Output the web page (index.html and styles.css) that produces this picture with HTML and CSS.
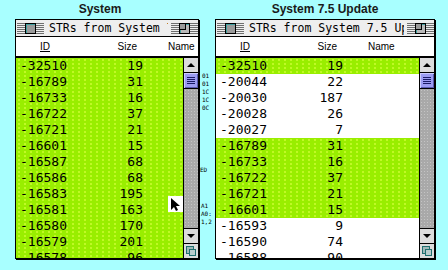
FILE: index.html
```html
<!DOCTYPE html>
<html lang="en">
<head>
    <meta charset="UTF-8">
    <title>STR# compare</title>
    <link rel="stylesheet" href="styles.css">
</head>
<body>
    <div class="desk">
        <!-- bits of windows lying behind -->
        <div class="behind">
            <span class="frag f1">01<br>01<br>1C<br>1C<br>0C</span>
            <span class="frag f3">ED</span>
            <span class="frag f4">A1<br>A0:<br>1,2</span>
        </div>

        <section class="pane pane-left">
            <h2>System</h2>
            <div class="win">
                <div class="titlebar">
                    <span class="stripes"></span>
                    <span class="closebox"></span>
                    <span class="stripes"></span>
                    <span class="title">STRs from System 7.5</span>
                    <span class="stripes"></span>
                    <span class="zoombox"></span>
                    <span class="stripes"></span>
                </div>
                <div class="colhead">
                    <span class="c-id"><u>ID</u></span>
                    <span class="c-size">Size</span>
                    <span class="c-name">Name</span>
                </div>
                <div class="body">
                    <div class="list">
                        <div class="row hit"><span class="c-id">-32510</span><span class="c-size">19</span></div>
                        <div class="row hit"><span class="c-id">-16789</span><span class="c-size">31</span></div>
                        <div class="row hit"><span class="c-id">-16733</span><span class="c-size">16</span></div>
                        <div class="row hit"><span class="c-id">-16722</span><span class="c-size">37</span></div>
                        <div class="row hit"><span class="c-id">-16721</span><span class="c-size">21</span></div>
                        <div class="row hit"><span class="c-id">-16601</span><span class="c-size">15</span></div>
                        <div class="row hit"><span class="c-id">-16587</span><span class="c-size">68</span></div>
                        <div class="row hit"><span class="c-id">-16586</span><span class="c-size">68</span></div>
                        <div class="row hit"><span class="c-id">-16583</span><span class="c-size">195</span></div>
                        <div class="row hit"><span class="c-id">-16581</span><span class="c-size">163</span></div>
                        <div class="row hit"><span class="c-id">-16580</span><span class="c-size">170</span></div>
                        <div class="row hit"><span class="c-id">-16579</span><span class="c-size">201</span></div>
                        <div class="row hit"><span class="c-id">-16578</span><span class="c-size">96</span></div>
                    </div>
                    <div class="scroll">
                        <span class="sb-btn up"></span>
                        <span class="thumb"></span>
                        <span class="track"></span>
                        <span class="sb-btn down"></span>
                        <span class="grow"></span>
                    </div>
                </div>
            </div>
        </section>

        <section class="pane pane-right">
            <h2>System 7.5 Update</h2>
            <div class="win">
                <div class="titlebar">
                    <span class="stripes"></span>
                    <span class="closebox"></span>
                    <span class="stripes"></span>
                    <span class="title">STRs from System 7.5 Update</span>
                    <span class="stripes"></span>
                    <span class="zoombox"></span>
                    <span class="stripes"></span>
                </div>
                <div class="colhead">
                    <span class="c-id"><u>ID</u></span>
                    <span class="c-size">Size</span>
                    <span class="c-name">Name</span>
                </div>
                <div class="body">
                    <div class="list">
                        <div class="row hit"><span class="c-id">-32510</span><span class="c-size">19</span></div>
                        <div class="row"><span class="c-id">-20044</span><span class="c-size">22</span></div>
                        <div class="row"><span class="c-id">-20030</span><span class="c-size">187</span></div>
                        <div class="row"><span class="c-id">-20028</span><span class="c-size">26</span></div>
                        <div class="row"><span class="c-id">-20027</span><span class="c-size">7</span></div>
                        <div class="row hit"><span class="c-id">-16789</span><span class="c-size">31</span></div>
                        <div class="row hit"><span class="c-id">-16733</span><span class="c-size">16</span></div>
                        <div class="row hit"><span class="c-id">-16722</span><span class="c-size">37</span></div>
                        <div class="row hit"><span class="c-id">-16721</span><span class="c-size">21</span></div>
                        <div class="row hit"><span class="c-id">-16601</span><span class="c-size">15</span></div>
                        <div class="row"><span class="c-id">-16593</span><span class="c-size">9</span></div>
                        <div class="row"><span class="c-id">-16590</span><span class="c-size">74</span></div>
                        <div class="row"><span class="c-id">-16588</span><span class="c-size">90</span></div>
                    </div>
                    <div class="scroll">
                        <span class="sb-btn up"></span>
                        <span class="thumb"></span>
                        <span class="track"></span>
                        <span class="sb-btn down"></span>
                        <span class="grow"></span>
                    </div>
                </div>
            </div>
        </section>

        <!-- mouse pointer, with the white block it left behind -->
        <div class="pointer">
            <svg width="15" height="16" viewBox="0 0 15 16">
                <path d="M3 2 L3 14 L6 11 L8 15 L10 14 L8 10 L12 10 Z" fill="#000"/>
            </svg>
        </div>
    </div>
</body>
</html>
```

FILE: styles.css
```css
body {
    margin: 0;
    background-color: #a8ffff; /* desktop cyan */
    font-family: 'Liberation Sans', Arial, sans-serif;
    color: #000;
}

.desk {
    position: relative;
    display: flex;
    gap: 16px;
    padding-left: 15px;
    height: 270px;
    overflow: hidden;
}

.pane {
    position: relative;
    z-index: 1;
    display: flex;
    flex-direction: column;
}

.pane h2 {
    margin: 0;
    height: 19px;
    font-size: 12px;
    line-height: 19px;
    font-weight: bold;
    text-align: center;
    color: #1a1a1a;
}

.pane-left h2 {
    padding-right: 14px;
}

.pane-left .win {
    width: 182px;
}

.pane-right .win {
    width: 218px;
}

.win {
    height: 238px;
    border: 1px solid #000;
    box-shadow: 1px 1px 0 #000;
    background-color: #fff;
    display: flex;
    flex-direction: column;
    overflow: hidden;
}

/* title bar */
.titlebar {
    height: 16px;
    flex: none;
    border-bottom: 1px solid #000;
    background-color: #eeeeee;
    display: flex;
    align-items: center;
    padding-left: 1px;
}

.stripes {
    flex: none;
    width: 8px;
    height: 11px;
    background: repeating-linear-gradient(to bottom, #6f6f6f 0 1px, transparent 1px 2px);
}

.closebox,
.zoombox {
    flex: none;
    width: 9px;
    height: 9px;
    border: 1px solid #000;
    background-color: #9a9a9a;
    box-shadow: inset 1px 1px 0 #3fa0a0;
}

.zoombox {
    position: relative;
    background-color: #b9b9b9;
}

.zoombox::after {
    content: '';
    position: absolute;
    left: 0;
    top: 0;
    width: 5px;
    height: 5px;
    border: 1px solid #000;
    border-left: none;
    border-top: none;
    background-color: #9a9a9a;
}

.title {
    flex: 1;
    min-width: 0;
    overflow: hidden;
    white-space: nowrap;
    padding-left: 5px;
    margin-right: 3px;
    font-family: 'DejaVu Sans Mono', monospace;
    font-size: 11.5px;
    line-height: 16px;
}

/* column header */
.colhead {
    flex: none;
    height: 19px;
    border-bottom: 2px solid #000;
    display: flex;
    font-size: 10px;
    line-height: 19px;
}

.colhead .c-id {
    width: 48px;
    padding-left: 24px;
}

.colhead .c-size {
    width: 49px;
    padding-right: 6px;
    text-align: right;
}

.colhead .c-name {
    padding-left: 25px;
}

/* list body */
.body {
    flex: 1;
    display: flex;
    min-height: 0;
}

.list {
    flex: 1;
    overflow: hidden;
}

.row {
    height: 16px;
    display: flex;
    font-family: 'DejaVu Sans Mono', monospace;
    font-size: 13px;
    line-height: 16px;
}

.row.hit {
    background-color: #99ee00; /* lime highlight */
    background-image: radial-gradient(circle, #d4ff3a 0.6px, transparent 0.9px);
    background-size: 6px 4px;
}

.row .c-id {
    width: 68px;
    padding-left: 4px;
}

.row .c-size {
    width: 55px;
    text-align: right;
}

/* scroll bar */
.scroll {
    flex: none;
    width: 14px;
    border-left: 1px solid #000;
    display: flex;
    flex-direction: column;
}

.sb-btn {
    flex: none;
    height: 14px;
    background-color: #dcdcdc;
    display: flex;
    align-items: center;
    justify-content: center;
}

.sb-btn.up {
    border-bottom: 1px solid #000;
}

.sb-btn.down {
    border-top: 1px solid #000;
}

.sb-btn::after {
    content: '';
    width: 0;
    height: 0;
    border-left: 4px solid transparent;
    border-right: 4px solid transparent;
}

.sb-btn.up::after {
    border-bottom: 4px solid #000;
}

.sb-btn.down::after {
    border-top: 4px solid #000;
}

.thumb {
    flex: none;
    height: 15px;
    border-bottom: 1px solid #000;
    background-color: #9c9cf2;
    box-shadow: inset 1px 1px 0 #ccccff, inset -1px -1px 0 #5a5ab0;
    position: relative;
}

.thumb::after {
    content: '';
    position: absolute;
    left: 3px;
    right: 3px;
    top: 4px;
    height: 7px;
    background: repeating-linear-gradient(to bottom, #1a1a66 0 1px, transparent 1px 2px);
}

.track {
    flex: 1;
    background-color: #a9a9a9;
    background-image: radial-gradient(circle, #c4c4c4 0.6px, transparent 0.9px);
    background-size: 3px 3px;
}

.grow {
    flex: none;
    height: 14px;
    border-top: 1px solid #000;
    background-color: #dcdcdc;
    position: relative;
}

.grow::before,
.grow::after {
    content: '';
    position: absolute;
    border: 1px solid #1f6f6f;
    background-color: #9fb8b8;
}

.grow::before {
    left: 2px;
    top: 2px;
    width: 6px;
    height: 6px;
}

.grow::after {
    left: 5px;
    top: 5px;
    width: 5px;
    height: 5px;
    background-color: #b8cccc;
}

/* pointer */
.pointer {
    position: absolute;
    left: 168px;
    top: 196px;
    width: 15px;
    height: 16px;
    background-color: #fff;
    z-index: 2;
}

.pointer svg {
    display: block;
}

/* fragments of windows underneath */
.behind {
    position: absolute;
    inset: 0;
    z-index: 0;
}

.frag {
    position: absolute;
    font-family: 'DejaVu Sans Mono', monospace;
    font-size: 6px;
    line-height: 8px;
    color: #000;
}

.f1 { left: 202px; top: 72px; }
.f3 { left: 200px; top: 166px; }
.f4 { left: 201px; top: 202px; }
```
